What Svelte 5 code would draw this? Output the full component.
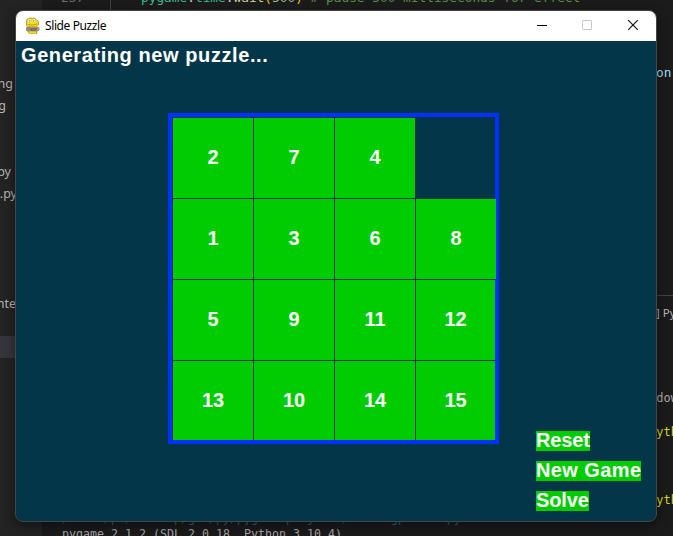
<script>
  const rows = [
    [2, 7, 4, null],
    [1, 3, 6, 8],
    [5, 9, 11, 12],
    [13, 10, 14, 15]
  ];
  const actions = [
    { label: 'Reset', width: 54, space: -0.15 },
    { label: 'New Game', width: 105, space: 0.4 },
    { label: 'Solve', width: 53, space: -0.1 }
  ];
  // Fragments of the editor that stick out from behind the game window
  const side = [
    { t: 'ng', right: 660, y: 76 },
    { t: 'g', right: 667, y: 98 },
    { t: 'py', right: 662, y: 164 },
    { t: '2.py', right: 656, y: 186 },
    { t: 'nte', right: 657, y: 296 }
  ];
  const terminal = [
    { t: 'on:', x: 656, y: 65, c: '#9cdcfe', s: 12.8 },
    { t: 'ndows', x: 649, y: 390, c: '#a8a8a8', s: 12 },
    { t: 'Pyth', x: 649, y: 424, c: '#d6d62c', s: 12 },
    { t: 'Pyth', x: 649, y: 492, c: '#d6d62c', s: 12 }
  ];
</script>

<div class="desktop">
  <div class="gutter"></div>
  <div class="selected"></div>
  <div class="guide"></div>
  <div class="panel-line"></div>
  {#each side as f}
    <span class="frag ui" style="right:{f.right}px;top:{f.y}px">{f.t}</span>
  {/each}
  {#each terminal as f}
    <span class="frag mono" style="left:{f.x}px;top:{f.y}px;color:{f.c};font-size:{f.s}px">{f.t}</span>
  {/each}
  <span class="frag ui shell">] Py</span>
  <span class="frag mono lineno">237</span>
  <span class="frag mono code"><b class="teal">pygame</b>.<b class="teal">time</b>.<b class="fn">wait</b><b class="br">(</b><b class="num">500</b><b class="br">)</b> <b class="cm"># pause 500 milliseconds for effect</b></span>
  <span class="frag mono path">/Users/pc/Desktop/git/py/pygame-projects/slidingpuzzle.py</span>
  <span class="frag mono version">pygame 2.1.2 (SDL 2.0.18, Python 3.10.4)</span>

  <main class="window">
    <header>
      <svg class="logo" width="16" height="18" viewBox="0 0 16 18">
        <path d="M3 9 L2 14 L4 17 H12 L13 12 L11 8Z" fill="#c3a928" />
        <path d="M1.5 5.5 Q1 1.5 4 1.5 Q5 .2 7 1.5 Q9 .2 10.5 2 L13.5 4.5 V8 L11 10 H4 L1.5 8.5Z" fill="#f1dc2e" stroke="#a58d21" stroke-width=".8" />
        <circle cx="4.5" cy="3.7" r="1.4" fill="#fffbd0" /><circle cx="9" cy="3.7" r="1.4" fill="#fffbd0" />
        <circle cx="4.7" cy="3.8" r=".6" fill="#444" /><circle cx="8.8" cy="3.8" r=".6" fill="#444" />
        <path d="M3 7.5 Q7 9 12 7" fill="none" stroke="#a88b13" stroke-width=".8" />
        <rect x="1" y="10" width="4" height="4" rx="1" fill="#898b88" /><rect x="5" y="11" width="8" height="3" fill="#747474" />
        <rect x="11" y="10" width="3.5" height="4" rx="1" fill="#999" /><rect x="10.5" y="11" width="1.5" height="1.5" fill="#b74735" />
        <path d="M4 15.5 H11" stroke="#f1d629" stroke-width="2" />
      </svg>
      <span class="title">Slide Puzzle</span>
      <svg class="controls" width="130" height="30" viewBox="0 0 130 30" fill="none">
        <path d="M11 14.5 H21" stroke="#000" />
        <rect x="56.5" y="9.5" width="9" height="9" rx=".6" stroke="#c8c8c8" />
        <path d="M102.2 9.2 L111.8 18.8 M111.8 9.2 L102.2 18.8" stroke="#111" stroke-width="1.15" />
      </svg>
    </header>
    <section class="game">
      <p class="message">Generating new puzzle...</p>
      <div class="board">
        {#each rows as row, r}
          {#each row as n}
            <div class="tile" class:last={r === 3} class:blank={n === null} class:over={n === 8}>{n ?? ''}</div>
          {/each}
        {/each}
      </div>
      <nav>
        {#each actions as a}
          <button style="width:{a.width}px;letter-spacing:{a.space}px">{a.label}</button>
        {/each}
      </nav>
    </section>
  </main>
</div>

<style>
  .desktop { position: relative; width: 673px; height: 536px; overflow: hidden; background: #1b1b1b; }
  .gutter { position: absolute; left: 0; top: 0; width: 42px; height: 536px; background: #232323; }
  .selected { position: absolute; left: 0; top: 336px; width: 16px; height: 22px; background: #35353b; }
  .guide { position: absolute; left: 110px; top: 0; width: 1px; height: 12px; background: #404040; }
  .panel-line { position: absolute; left: 656px; top: 295px; width: 17px; height: 1px; background: #444; }
  .frag { position: absolute; white-space: pre; line-height: 16px; }
  .ui { font-family: "Noto Sans", sans-serif; font-size: 12.5px; color: #b5b5b5; }
  .mono { font-family: "DejaVu Sans Mono", monospace; }
  .shell { left: 656px; top: 305px; font-size: 11.5px; }
  .lineno { left: 61px; top: -10px; font-size: 12.8px; color: #6d6d6d; }
  .code { left: 141px; top: -10px; font-size: 12.8px; color: #ccc; }
  .code b { font-weight: normal; }
  .teal { color: #3cb898; }
  .fn { color: #d2d29b; }
  .br { color: #e4c500; }
  .num { color: #a5bd94; }
  .cm { color: #5c9148; }
  .path { left: 62px; top: 510px; font-size: 11.63px; color: #286f8b; }
  .version { left: 62px; top: 526px; font-size: 11.63px; color: #a5a5a5; }
  .window { position: absolute; left: 15px; top: 10px; box-sizing: border-box; width: 642px; height: 512px; border: 1px solid #464646; border-radius: 8px; overflow: hidden; box-shadow: 0 4px 12px #0007; background: #033649; }
  header { display: flex; align-items: center; height: 30px; background: #fff; }
  .logo { margin: 0 4px 1px 9px; }
  .title { flex: 1; font: 12px/16px "Noto Sans", sans-serif; letter-spacing: -.4px; color: #000; }
  .game { position: relative; height: 480px; color: #fff; font: bold 20px/20px "Liberation Sans", Arial, sans-serif; display: flex; flex-direction: column; align-items: flex-start; }
  .message { margin: 4px 0 0 5px; height: 20px; line-height: 20px; letter-spacing: .58px; white-space: nowrap; }
  .board { box-sizing: border-box; margin: 48px 0 0 152px; width: 331px; height: 331px; border: 4px solid #0032ff; padding: 1px 0 0 1px; display: grid; grid-template-columns: repeat(3, 80px) 79px; grid-template-rows: repeat(3, 80px) 79px; gap: 1px; }
  .tile { display: flex; align-items: center; justify-content: center; background: #00cc00; padding-bottom: 2px; box-sizing: border-box; }
  .last { padding-bottom: 1px; }
  .blank { background: none; }
  .over { margin-right: -1px; z-index: 1; }
  nav { display: flex; flex-direction: column; align-items: flex-start; gap: 10px; margin: -13px 0 0 520px; }
  button { height: 20px; padding: 0 0 2px; border: 0; border-radius: 0; background: #00cc00; color: #fff; font: inherit; line-height: 18px; text-align: left; white-space: nowrap; }
</style>
